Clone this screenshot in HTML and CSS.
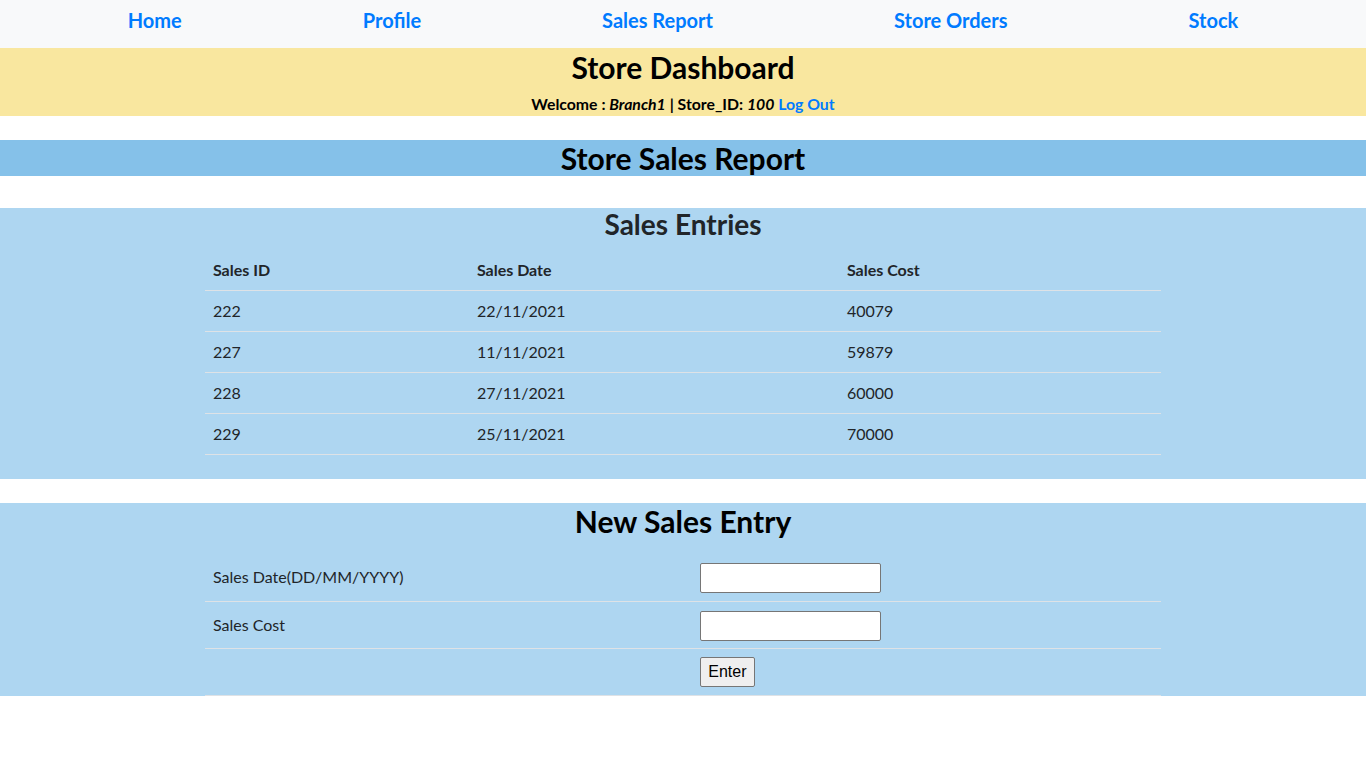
FILE: index.html
```html
<!DOCTYPE html>
<html>
<head>
<meta charset="utf-8">
<title>Store Dashboard</title>
<link rel="stylesheet" href="styles.css">
</head>
<body>
<nav class="topnav">
  <a href="#">Home</a>
  <a href="#">Profile</a>
  <a href="#">Sales Report</a>
  <a href="#">Store Orders</a>
  <a href="#">Stock</a>
</nav>
<header class="dash">
  <h1 class="dash-title">Store Dashboard</h1>
  <p class="welcome">Welcome : <i>Branch1</i> | Store_ID: <i>100</i> <a href="#">Log Out</a></p>
</header>
<div class="report-bar">Store Sales Report</div>
<section class="panel entries">
  <h2 class="panel-title">Sales Entries</h2>
  <table class="grid">
    <thead>
      <tr><th class="c1">Sales ID</th><th class="c2">Sales Date</th><th>Sales Cost</th></tr>
    </thead>
    <tbody>
      <tr><td>222</td><td>22/11/2021</td><td>40079</td></tr>
      <tr><td>227</td><td>11/11/2021</td><td>59879</td></tr>
      <tr><td>228</td><td>27/11/2021</td><td>60000</td></tr>
      <tr><td>229</td><td>25/11/2021</td><td>70000</td></tr>
    </tbody>
  </table>
</section>
<section class="panel newentry">
  <h2 class="panel-title big">New Sales Entry</h2>
  <table class="grid form">
    <tr><td class="lab">Sales Date(DD/MM/YYYY)</td><td><input type="text" class="field"></td></tr>
    <tr><td class="lab">Sales Cost</td><td><input type="text" class="field"></td></tr>
    <tr><td class="lab"></td><td><button class="btn">Enter</button></td></tr>
  </table>
</section>
</body>
</html>
```
FILE: styles.css
```css
* { box-sizing: border-box; }
body {
  margin: 0;
  font-family: Lato, "Noto Sans", sans-serif;
  color: #212529;
  background: #fff;
}
a { color: #007bff; text-decoration: none; }
.topnav {
  height: 48px;
  background: #f8f9fa;
  display: flex;
  justify-content: center;
  align-items: center;
  gap: 181px;
}
.topnav a {
  font-size: 20px;
  font-weight: 700;
  line-height: 24px;
  padding-bottom: 8px;
}
.dash {
  background: #f9e79f;
  text-align: center;
  height: 68px;
}
.dash-title {
  margin: 0;
  padding-top: 1px;
  font-size: 30px;
  font-weight: 700;
  line-height: 36px;
  color: #000;
}
.welcome {
  margin: 9px 0 0;
  font-size: 15.8px;
  font-weight: 700;
  line-height: 20px;
  color: #000;
}
.report-bar {
  margin-top: 24px;
  height: 36px;
  background: #85c1e9;
  text-align: center;
  font-size: 30px;
  font-weight: 700;
  line-height: 36px;
  color: #000;
}
.panel {
  background: #aed6f1;
}
.entries { margin-top: 32px; padding-bottom: 24px; }
.newentry { margin-top: 24px; }
.panel-title {
  margin: 0 0 10px;
  text-align: center;
  font-size: 28px;
  font-weight: 700;
  line-height: 32px;
}
.panel-title.big {
  color: #000;
  font-size: 30px;
  line-height: 36px;
  margin-bottom: 15px;
}
.grid {
  width: 70%;
  margin: 0 auto;
  border-collapse: collapse;
  font-size: 16px;
}
.grid th, .grid td {
  text-align: left;
  padding: 8px;
  line-height: 24px;
  border-bottom: 1px solid #dee2e6;
  vertical-align: middle;
}
.grid th { font-weight: 700; }
.grid .c1 { width: 264px; }
.grid .c2 { width: 370px; }
.form td { height: 47px; padding-top: 0; padding-bottom: 0; }
.form .lab { width: 487px; }
.field {
  width: 181px;
  height: 30px;
  border: 1px solid #767676;
  border-radius: 2px;
  background: #fff;
  margin: 1px 0 -1px;
  display: block;
}
.btn {
  display: block;
  width: 55px;
  height: 30px;
  padding: 1px 0 0;
  font-family: "Liberation Sans", Arial, sans-serif;
  font-size: 16px;
  color: #000;
  background: #efefef;
  border: 1px solid #767676;
  border-radius: 2px;
  margin: 0;
}
```
